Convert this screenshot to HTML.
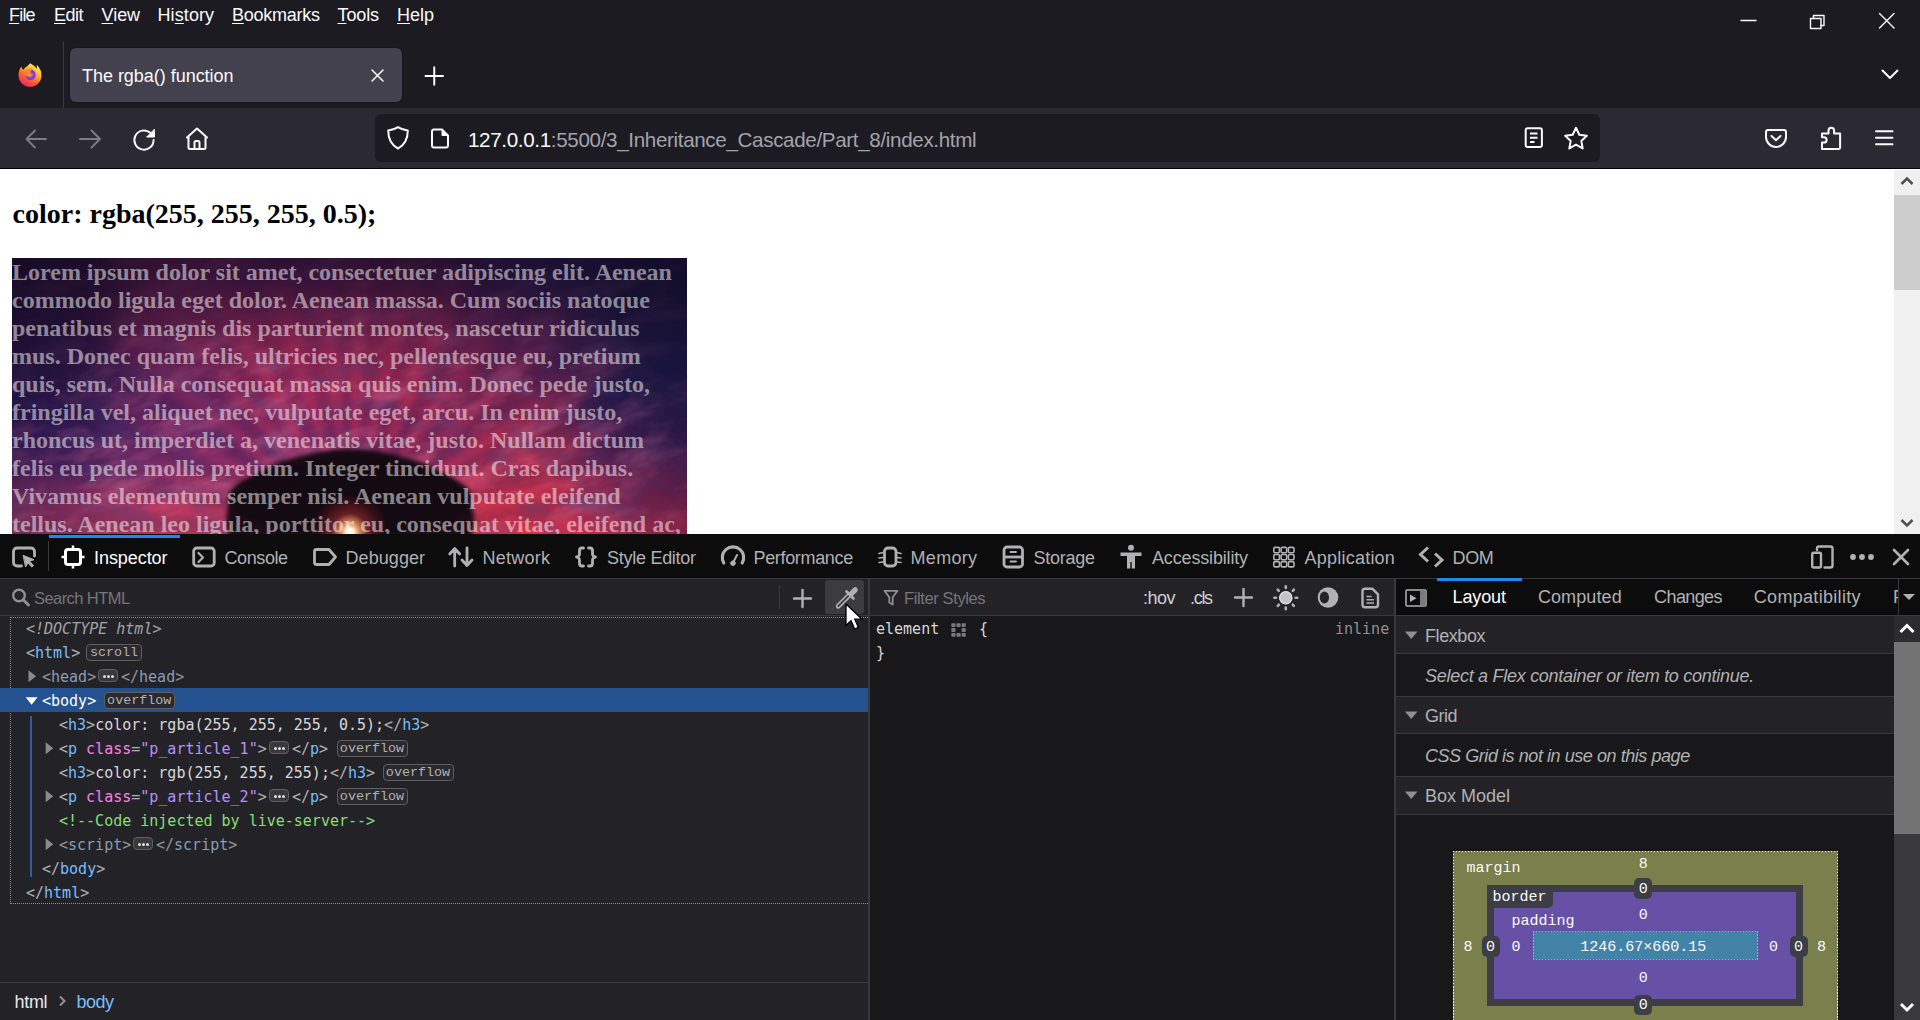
<!DOCTYPE html>
<html lang="en"><head>
<meta charset="utf-8">
<title>The rgba() function</title>
<style>
*{box-sizing:border-box;margin:0;padding:0}
html,body{width:1920px;height:1020px;overflow:hidden;background:#1c1b22}
body{position:relative;font-family:"Liberation Sans",sans-serif;color:#fbfbfe}
.abs{position:absolute}
.t{position:absolute;white-space:nowrap;line-height:1}
svg{position:absolute;overflow:visible}
/* ---------- browser chrome ---------- */
#titlebar{left:0;top:0;width:1920px;height:108px;background:#1c1b22}
.menu{font-size:18px;top:6px;color:#fbfbfe}
.menu u{text-decoration:underline;text-underline-offset:2px;text-decoration-thickness:1px}
#tab{left:70px;top:48px;width:332px;height:54px;background:#42414d;border-radius:6px;box-shadow:0 0 2px rgba(0,0,0,.5)}
#navbar{left:0;top:108px;width:1920px;height:60px;background:#2b2a33}
#navline{left:0;top:168px;width:1920px;height:1px;background:#030309}
#urlbar{left:375px;top:114px;width:1225px;height:48px;background:#1c1b22;border-radius:6px}
/* ---------- page ---------- */
#page{left:0;top:169px;width:1920px;height:365px;background:#fff;overflow:hidden}
#page h3{position:absolute;left:12.5px;top:28.5px;font:bold 28px/32px "Liberation Serif",serif;color:#000;white-space:nowrap}
#art{position:absolute;left:12px;top:89px;width:675px;height:300px;overflow:hidden;background:#3a1c4a}
#art p{position:absolute;left:0;top:0;width:675px;font:bold 24px/28px "Liberation Serif",serif;color:rgba(255,255,255,.5)}

#art .sky{position:absolute;inset:0;background:
 radial-gradient(ellipse 280px 130px at 0% 0%,rgba(18,12,40,.95),rgba(18,12,40,0) 100%),
 radial-gradient(ellipse 250px 240px at 100% 10%,rgba(14,14,48,.97),rgba(14,14,48,0) 100%),
 radial-gradient(ellipse 170px 170px at 104% 60%,rgba(30,22,80,.92),rgba(30,22,80,0) 100%),
 radial-gradient(ellipse 240px 110px at 2% 58%,rgba(32,22,82,.95),rgba(32,22,82,0) 100%),
 radial-gradient(ellipse 200px 90px at 50% 8%,rgba(40,18,64,.7),rgba(40,18,64,0) 100%),
 radial-gradient(ellipse 440px 95px at 50% 108%,rgba(222,72,98,.9),rgba(222,72,98,0) 100%),
 linear-gradient(180deg,#30133c 0%,#561c52 30%,#64225e 55%,#8c3468 82%,#b84a6a 100%)}
#art .mesh{position:absolute;left:-150px;top:-150px;width:975px;height:576px;filter:blur(28px)}
#art .mesh i{position:absolute;display:block}
#art .rays{position:absolute;left:-100px;top:-120px;width:875px;height:520px;filter:blur(2.500px);opacity:.36;background:
 repeating-conic-gradient(from 1deg at 50% 75.500%,rgba(235,55,85,.45) 0deg 2deg,rgba(24,12,56,.42) 5deg 8deg,rgba(235,55,85,.45) 11deg),
 repeating-conic-gradient(from 4deg at 50% 75.500%,rgba(235,45,75,.4) 0deg 3deg,rgba(24,12,56,.0) 7deg 13deg,rgba(235,45,75,.4) 17deg);
 -webkit-mask-image:radial-gradient(ellipse 400px 270px at 52% 75%,#000 0%,#000 45%,transparent 100%);mask-image:radial-gradient(ellipse 400px 270px at 52% 75%,#000 0%,#000 45%,transparent 100%)}
#art .glow{position:absolute;inset:0;background:linear-gradient(180deg,rgba(12,6,28,.38) 0,rgba(12,6,28,.1) 30%,rgba(12,6,28,0) 45%),linear-gradient(90deg,rgba(14,8,40,.3) 0,rgba(14,8,40,0) 16%,rgba(14,8,40,0) 84%,rgba(10,8,40,.3) 100%)}
#art .tree{position:absolute;left:214px;top:192px;width:248px;height:140px;border-radius:50%;background:#140a12;filter:blur(2px);opacity:.95}
#art .tree.t2{left:216px;top:204px;width:244px;height:72px}
#art .tree.t3{left:280px;top:192px;width:116px;height:60px;opacity:.6}
#art .sun{position:absolute;left:300px;top:236px;width:76px;height:76px;border-radius:50%;background:radial-gradient(circle,#fff 0,#fff3dc 7%,rgba(255,170,110,.9) 15%,rgba(230,60,60,.4) 34%,rgba(200,40,50,.18) 55%,rgba(200,40,50,0) 72%)}
#pscroll{left:1894px;top:170px;width:26px;height:364px;background:#f0f0f0}
#pthumb{left:1894px;top:195px;width:26px;height:95px;background:#cdcdcd}
/* ---------- devtools ---------- */
#dt{left:0;top:534px;width:1920px;height:486px;background:#232327}
#dtbar{left:0;top:534px;width:1920px;height:44px;background:#0c0c0d}
.dtl{font-size:18px;top:549px;color:#b1b1b3}
.mono{font-family:"Liberation Mono",monospace;font-size:15px}

/* markup */
.row{position:absolute;left:0;height:24px;white-space:pre;font:15px/24px "DejaVu Sans Mono","Liberation Mono",monospace;color:#b1b1b3;letter-spacing:0;margin-top:.5px}
.tg{color:#75bfff}.an{color:#ff7de9}.av{color:#b98eff}.tx{color:#d7d7db}.cm{color:#86de74}.gy{color:#939395}.gy .tg{color:#8a9bb5}
.bdg{position:absolute;height:17px;border:1px solid #5e5e63;border-radius:4px;background:#2a2a2e;color:#b1b1b3;font:13.4px/15px "Liberation Mono",monospace;text-align:center;white-space:nowrap}
.ell{position:absolute;width:20px;height:13px;border:1px solid #5e5e63;border-radius:4px;background:#38383d}
.ell i{position:absolute;top:4.5px;width:3px;height:3px;border-radius:50%;background:#e0e0e2}
.hl{background:#7a7a80}
.line{position:absolute;background:#38383d}
.sbt{font-size:16.5px;top:590px;color:#b1b1b3}
.acc{position:absolute;left:1396px;width:498px;background:#232327;border-top:1px solid #38383d;border-bottom:1px solid #38383d}
.acct{font-size:18px;color:#b1b1b3;left:1425px}
.acci{font-size:18px;font-style:italic;color:#b1b1b3;left:1425px}
.bm{font:15px/1 "Liberation Mono",monospace;color:#fbfbfe;position:absolute;white-space:nowrap}
.pill{position:absolute;background:#3d3d45;border-radius:5px}
</style>
</head>
<body>
<!-- TITLEBAR -->
<div id="titlebar" class="abs"></div>
<div class="t menu" style="left: 9px; letter-spacing: -0.81px;"><u>F</u>ile</div>
<div class="t menu" style="left: 54px; letter-spacing: -0.48px;"><u>E</u>dit</div>
<div class="t menu" style="left: 101.5px; letter-spacing: -0.03px;"><u>V</u>iew</div>
<div class="t menu" style="left: 157.5px; letter-spacing: 0.1px;">Hi<u>s</u>tory</div>
<div class="t menu" style="left: 232px; letter-spacing: -0.24px;"><u>B</u>ookmarks</div>
<div class="t menu" style="left: 337.5px; letter-spacing: -0.11px;"><u>T</u>ools</div>
<div class="t menu" style="left: 397px; letter-spacing: 0.02px;"><u>H</u>elp</div>
<!-- NAVBAR -->
<div id="navbar" class="abs"></div>
<div id="navline" class="abs"></div>
<div id="urlbar" class="abs"></div>
<!-- TAB -->
<div id="tab" class="abs"></div>
<div class="t" style="left: 82px; top: 66.5px; font-size: 18px; color: rgb(251, 251, 254); letter-spacing: -0.03px;">The rgba() function</div>
<div class="t" style="left: 468px; top: 129.5px; font-size: 20.6px; color: rgb(251, 251, 254); letter-spacing: -0.34px;">127.0.0.1<span style="color:#a3a3ab">:5500/3_Inheritance_Cascade/Part_8/index.html</span></div>
<!-- PAGE -->
<div id="page" class="abs">
<h3>color: rgba(255, 255, 255, 0.5);</h3>
<div id="art"><div class="mesh"><i style="left:30.0px;top:30.0px;width:233.5px;height:167.0px;background:#24102e"></i><i style="left:262.5px;top:30.0px;width:113.5px;height:167.0px;background:#4a1840"></i><i style="left:375.0px;top:30.0px;width:113.5px;height:167.0px;background:#3a1440"></i><i style="left:487.5px;top:30.0px;width:113.5px;height:167.0px;background:#3a1438"></i><i style="left:600.0px;top:30.0px;width:113.5px;height:167.0px;background:#261640"></i><i style="left:712.5px;top:30.0px;width:233.5px;height:167.0px;background:#1a1436"></i><i style="left:30.0px;top:196.0px;width:233.5px;height:47.0px;background:#2a1238"></i><i style="left:262.5px;top:196.0px;width:113.5px;height:47.0px;background:#6e2050"></i><i style="left:375.0px;top:196.0px;width:113.5px;height:47.0px;background:#8a2452"></i><i style="left:487.5px;top:196.0px;width:113.5px;height:47.0px;background:#7a2250"></i><i style="left:600.0px;top:196.0px;width:113.5px;height:47.0px;background:#4a1a48"></i><i style="left:712.5px;top:196.0px;width:233.5px;height:47.0px;background:#1e1840"></i><i style="left:30.0px;top:242.0px;width:233.5px;height:47.0px;background:#2a1644"></i><i style="left:262.5px;top:242.0px;width:113.5px;height:47.0px;background:#6a2458"></i><i style="left:375.0px;top:242.0px;width:113.5px;height:47.0px;background:#a02a56"></i><i style="left:487.5px;top:242.0px;width:113.5px;height:47.0px;background:#9a2850"></i><i style="left:600.0px;top:242.0px;width:113.5px;height:47.0px;background:#5a1e4c"></i><i style="left:712.5px;top:242.0px;width:233.5px;height:47.0px;background:#201a46"></i><i style="left:30.0px;top:288.0px;width:233.5px;height:47.0px;background:#2a1850"></i><i style="left:262.5px;top:288.0px;width:113.5px;height:47.0px;background:#5a2262"></i><i style="left:375.0px;top:288.0px;width:113.5px;height:47.0px;background:#8a2860"></i><i style="left:487.5px;top:288.0px;width:113.5px;height:47.0px;background:#8a2656"></i><i style="left:600.0px;top:288.0px;width:113.5px;height:47.0px;background:#7a2450"></i><i style="left:712.5px;top:288.0px;width:233.5px;height:47.0px;background:#261c50"></i><i style="left:30.0px;top:334.0px;width:233.5px;height:47.0px;background:#44226a"></i><i style="left:262.5px;top:334.0px;width:113.5px;height:47.0px;background:#6a2a6c"></i><i style="left:375.0px;top:334.0px;width:113.5px;height:47.0px;background:#6a2868"></i><i style="left:487.5px;top:334.0px;width:113.5px;height:47.0px;background:#6a2660"></i><i style="left:600.0px;top:334.0px;width:113.5px;height:47.0px;background:#b02c4c"></i><i style="left:712.5px;top:334.0px;width:233.5px;height:47.0px;background:#4a2058"></i><i style="left:30.0px;top:380.0px;width:233.5px;height:167.0px;background:#a03660"></i><i style="left:262.5px;top:380.0px;width:113.5px;height:167.0px;background:#b83c5e"></i><i style="left:375.0px;top:380.0px;width:113.5px;height:167.0px;background:#c04058"></i><i style="left:487.5px;top:380.0px;width:113.5px;height:167.0px;background:#c83c50"></i><i style="left:600.0px;top:380.0px;width:113.5px;height:167.0px;background:#d03248"></i><i style="left:712.5px;top:380.0px;width:233.5px;height:167.0px;background:#b02c50"></i></div><div class="rays"></div><svg class="nz" width="675" height="276" viewBox="0 0 675 276" style="left:0;top:0;overflow:hidden"><defs><filter id="nz" x="0" y="0" width="100%" height="100%"><feTurbulence type="fractalNoise" baseFrequency="0.018 0.045" numOctaves="4" seed="7" result="n"></feTurbulence><feColorMatrix in="n" type="matrix" values="0 0 0 0 0.86  0 0 0 0 0.2  0 0 0 0 0.36  1.9 0 0 0 -0.85"></feColorMatrix></filter><filter id="nz2" x="0" y="0" width="100%" height="100%"><feTurbulence type="fractalNoise" baseFrequency="0.022 0.05" numOctaves="4" seed="23" result="n"></feTurbulence><feColorMatrix in="n" type="matrix" values="0 0 0 0 0.07  0 0 0 0 0.05  0 0 0 0 0.2  0 1.9 0 0 -0.85"></feColorMatrix></filter><radialGradient id="nm" cx=".5" cy=".9" r=".75"><stop offset="0" stop-color="#fff"></stop><stop offset=".6" stop-color="#fff"></stop><stop offset="1" stop-color="#fff" stop-opacity=".25"></stop></radialGradient><mask id="nmk"><rect width="675" height="276" fill="url(#nm)"></rect></mask></defs><g mask="url(#nmk)"><rect x="-160" y="-160" width="995" height="600" filter="url(#nz)" opacity=".55" transform="rotate(-18 338 276)"></rect><rect x="-160" y="-160" width="995" height="600" filter="url(#nz2)" opacity=".5" transform="rotate(14 338 276)"></rect></g></svg><div class="glow"></div><div class="tree"></div><div class="tree t2"></div><div class="tree t3"></div><div class="sun"></div><p>Lorem ipsum dolor sit amet, consectetuer adipiscing elit. Aenean commodo ligula eget dolor. Aenean massa. Cum sociis natoque penatibus et magnis dis parturient montes, nascetur ridiculus mus. Donec quam felis, ultricies nec, pellentesque eu, pretium quis, sem. Nulla consequat massa quis enim. Donec pede justo, fringilla vel, aliquet nec, vulputate eget, arcu. In enim justo, rhoncus ut, imperdiet a, venenatis vitae, justo. Nullam dictum felis eu pede mollis pretium. Integer tincidunt. Cras dapibus. Vivamus elementum semper nisi. Aenean vulputate eleifend tellus. Aenean leo ligula, porttitor eu, consequat vitae, eleifend ac, enim. Aliquam lorem ante, dapibus in, viverra quis, feugiat a, tellus.</p></div>
</div>
<div id="pscroll" class="abs"></div>
<div id="pthumb" class="abs"></div>
<!-- DEVTOOLS -->
<div id="dt" class="abs"></div>
<div id="dtbar" class="abs"></div>
<!-- devtools toolbar -->
<div class="abs" style="left:49px;top:534.5px;width:131px;height:3.5px;background:#1f87ef"></div>
<div class="line" style="left:48px;top:541px;width:1px;height:30px"></div>
<div class="t dtl" style="left: 94px; color: rgb(255, 255, 255); letter-spacing: -0.06px;">Inspector</div>
<div class="t dtl" style="left: 224.5px; letter-spacing: -0.41px;">Console</div>
<div class="t dtl" style="left: 345.5px; letter-spacing: 0.08px;">Debugger</div>
<div class="t dtl" style="left: 482.5px; letter-spacing: 0.26px;">Network</div>
<div class="t dtl" style="left: 607px; letter-spacing: -0.27px;">Style Editor</div>
<div class="t dtl" style="left: 753.5px; letter-spacing: -0.34px;">Performance</div>
<div class="t dtl" style="left: 910.5px; letter-spacing: 0.32px;">Memory</div>
<div class="t dtl" style="left: 1033.5px; letter-spacing: -0.24px;">Storage</div>
<div class="t dtl" style="left: 1152px; letter-spacing: -0.16px;">Accessibility</div>
<div class="t dtl" style="left: 1304.5px; letter-spacing: 0.23px;">Application</div>
<div class="t dtl" style="left: 1452.5px; letter-spacing: -0.32px;">DOM</div>

<div class="abs" style="left:0;top:578px;width:1920px;height:38px;background:#232327;border-top:1px solid #38383d;border-bottom:1px solid #38383d"></div>
<div class="t sbt" style="left: 34px; color: rgb(117, 117, 122); letter-spacing: -0.57px;">Search HTML</div>
<div class="line" style="left:779px;top:585px;width:1px;height:24px"></div>
<div class="abs" style="left:825px;top:580px;width:39px;height:34px;border-radius:3px;background:#3b3b40"></div>
<div class="t sbt" style="left: 904px; color: rgb(117, 117, 122); letter-spacing: -0.38px;">Filter Styles</div>
<div class="t sbt" style="left: 1143px; top: 588.5px; font-size: 18px; color: rgb(207, 207, 210); letter-spacing: -0.48px;">:hov</div>
<div class="t sbt" style="left: 1190px; top: 588.5px; font-size: 18px; color: rgb(207, 207, 210); letter-spacing: -1.3px;">.cls</div>
<!--ICONS-SEARCH-->
<div class="abs" style="left:0;top:688px;width:868px;height:24px;background:#24518f"></div>
<div class="abs" style="left:10px;top:617px;width:858px;height:287px;border:1px dotted #8f8f94;border-right:none"></div>
<div class="abs" style="left:0;top:688px;width:868px;height:24px;background:#24518f"></div>
<div class="abs" style="left:30px;top:716px;width:2px;height:161px;background:#2f5c9c"></div>
<div class="row" style="left:26px;top:616px"><i class="gy" style="color:#a3a3a8">&lt;!DOCTYPE html&gt;</i></div>
<div class="row" style="left:26px;top:640px">&lt;<span class="tg">html</span>&gt;</div>
<div class="row" style="left:42px;top:664px"><span class="gy">&lt;<span class="tg">head</span>&gt;</span></div>
<div class="row" style="left:121px;top:664px"><span class="gy">&lt;/<span class="tg">head</span>&gt;</span></div>
<div class="row" style="left:42px;top:688px"><span style="color:#fff">&lt;body&gt;</span></div>
<div class="row" style="left:59px;top:712px">&lt;<span class="tg">h3</span>&gt;<span class="tx">color: rgba(255, 255, 255, 0.5);</span>&lt;/<span class="tg">h3</span>&gt;</div>
<div class="row" style="left:59px;top:736px">&lt;<span class="tg">p</span> <span class="an">class</span>=<span class="av">"p_article_1"</span>&gt;</div>
<div class="row" style="left:292px;top:736px">&lt;/<span class="tg">p</span>&gt;</div>
<div class="row" style="left:59px;top:760px">&lt;<span class="tg">h3</span>&gt;<span class="tx">color: rgb(255, 255, 255);</span>&lt;/<span class="tg">h3</span>&gt;</div>
<div class="row" style="left:59px;top:784px">&lt;<span class="tg">p</span> <span class="an">class</span>=<span class="av">"p_article_2"</span>&gt;</div>
<div class="row" style="left:292px;top:784px">&lt;/<span class="tg">p</span>&gt;</div>
<div class="row" style="left:59px;top:808px"><span class="cm">&lt;!--Code injected by live-server--&gt;</span></div>
<div class="row" style="left:59px;top:832px"><span class="gy">&lt;<span class="tg">script</span>&gt;</span></div>
<div class="row" style="left:156px;top:832px"><span class="gy">&lt;/<span class="tg">script</span>&gt;</span></div>
<div class="row" style="left:42px;top:856px">&lt;/<span class="tg">body</span>&gt;</div>
<div class="row" style="left:26px;top:880px">&lt;/<span class="tg">html</span>&gt;</div>
<div class="bdg" style="left:86px;top:643.5px;width:56px">scroll</div>
<div class="bdg" style="left:104px;top:691.5px;width:70.5px">overflow</div>
<div class="bdg" style="left:336.5px;top:739.5px;width:71.0px">overflow</div>
<div class="bdg" style="left:382.5px;top:763.5px;width:71.0px">overflow</div>
<div class="bdg" style="left:336.5px;top:787.5px;width:71.0px">overflow</div>
<div class="ell" style="left:98px;top:669px"><i style="left:3.5px"></i><i style="left:7.5px"></i><i style="left:11.5px"></i></div>
<div class="ell" style="left:269px;top:741px"><i style="left:3.5px"></i><i style="left:7.5px"></i><i style="left:11.5px"></i></div>
<div class="ell" style="left:269px;top:789px"><i style="left:3.5px"></i><i style="left:7.5px"></i><i style="left:11.5px"></i></div>
<div class="ell" style="left:133px;top:837px"><i style="left:3.5px"></i><i style="left:7.5px"></i><i style="left:11.5px"></i></div>
<!--ICONS-MARKUP-->
<div class="line" style="left:0;top:982px;width:868px;height:1px"></div>
<div class="t" style="left: 14.5px; top: 993px; font-size: 18px; color: rgb(232, 232, 234); letter-spacing: -0.31px;">html</div>
<div class="t" style="left: 76.5px; top: 993px; font-size: 18px; color: rgb(117, 191, 255); letter-spacing: -0.48px;">body</div>
<div class="abs" style="left:868px;top:579px;width:2px;height:441px;background:#38383d"></div>
<div class="abs" style="left:870px;top:616px;width:524px;height:404px;background:#18181a"></div>
<div class="row" style="left:876px;top:616px;color:#d7d7db">element</div>
<div class="row" style="left:979px;top:616px;color:#d7d7db">{</div>
<div class="row" style="left:876px;top:640px;color:#d7d7db">}</div>
<div class="row" style="left:1335px;top:616px;color:#8f8f94">inline</div>
<div class="abs" style="left:1393.5px;top:579px;width:2px;height:441px;background:#38383d"></div>
<div class="abs" style="left:1396px;top:579px;width:524px;height:36px;background:#0c0c0d"></div>
<div class="abs" style="left:1396px;top:616px;width:524px;height:404px;background:#18181a"></div>
<div class="abs" style="left:1437px;top:578px;width:85px;height:3px;background:#1f87ef"></div>
<div class="t dtl" style="left: 1452.5px; top: 588px; color: rgb(255, 255, 255); letter-spacing: -0.13px;">Layout</div>
<div class="t dtl" style="left: 1537.9px; top: 588px; letter-spacing: 0.11px;">Computed</div>
<div class="t dtl" style="left: 1654.1px; top: 588px; letter-spacing: -0.61px;">Changes</div>
<div class="t dtl" style="left: 1753.8px; top: 588px; letter-spacing: 0.31px;">Compatibility</div>
<div class="abs" style="left:1893px;top:588px;width:5px;height:20px;overflow:hidden"><div class="t dtl" style="left:0;top:0">Fonts</div></div>
<div class="line" style="left:1898px;top:579px;width:1px;height:36px"></div>
<div class="acc" style="top:615px;height:39px"></div>
<div class="acc" style="top:696px;height:38px"></div>
<div class="acc" style="top:776px;height:39px"></div>
<div class="t acct" style="top: 627px; letter-spacing: -0.41px;">Flexbox</div>
<div class="t acct" style="top: 707px; letter-spacing: -0.47px;">Grid</div>
<div class="t acct" style="top: 787px; letter-spacing: 0.01px;">Box Model</div>
<div class="t acci" style="top: 667px; letter-spacing: -0.28px;">Select a Flex container or item to continue.</div>
<div class="t acci" style="top: 747px; letter-spacing: -0.44px;">CSS Grid is not in use on this page</div>
<div class="abs" style="left:1894px;top:616px;width:26px;height:404px;background:#38383d"></div>
<div class="abs" style="left:1894px;top:616px;width:26px;height:26px;background:#2b2b30"></div>
<div class="abs" style="left:1894px;top:642px;width:26px;height:192px;background:#737373"></div>
<!--ICONS-LAYOUT-->
<div class="abs" style="left:1453px;top:851px;width:385px;height:180px;background:repeating-linear-gradient(90deg,#eef4c4 0 1.5px,transparent 1.5px 3px) 0 0/100% 1px no-repeat,repeating-linear-gradient(180deg,#eef4c4 0 1.5px,transparent 1.5px 3px) 0 0/1px 100% no-repeat,repeating-linear-gradient(180deg,#eef4c4 0 1.5px,transparent 1.5px 3px) 100% 0/1px 100% no-repeat,#7a804c"></div>
<div class="abs" style="left:1487px;top:885px;width:316px;height:121px;background:#3d3d45"></div>
<div class="abs" style="left:1494px;top:892px;width:302px;height:107px;background:#6651a6"></div>
<div class="abs" style="left:1487px;top:885px;width:66px;height:22.5px;background:#3d3d45;border-radius:0 0 5px 0"></div>
<div class="abs" style="left:1533px;top:931px;width:225px;height:29px;background:repeating-linear-gradient(90deg,#58c0f0 0 1.5px,transparent 1.5px 3px) 0 0/100% 1px no-repeat,repeating-linear-gradient(90deg,#58c0f0 0 1.5px,transparent 1.5px 3px) 0 100%/100% 1px no-repeat,repeating-linear-gradient(180deg,#58c0f0 0 1.5px,transparent 1.5px 3px) 0 0/1px 100% no-repeat,repeating-linear-gradient(180deg,#58c0f0 0 1.5px,transparent 1.5px 3px) 100% 0/1px 100% no-repeat,#4483a8"></div>
<div class="pill" style="left:1634px;top:878px;width:18px;height:21px"></div>
<div class="pill" style="left:1634px;top:994.5px;width:18px;height:20.5px"></div>
<div class="pill" style="left:1482px;top:936px;width:17.5px;height:21px"></div>
<div class="pill" style="left:1790px;top:936px;width:17.5px;height:21px"></div>
<div class="bm" style="left:1466.5px;top:861.0px">margin</div>
<div class="bm" style="left:1492.5px;top:890.25px">border</div>
<div class="bm" style="left:1511.5px;top:913.5px">padding</div>
<div class="bm" style="left:1543.2px;top:857.25px;width:200px;text-align:center">8</div>
<div class="bm" style="left:1543.2px;top:882.0px;width:200px;text-align:center">0</div>
<div class="bm" style="left:1543.2px;top:908.0px;width:200px;text-align:center">0</div>
<div class="bm" style="left:1543.2px;top:940.25px;width:200px;text-align:center">1246.67×660.15</div>
<div class="bm" style="left:1543.2px;top:971.0px;width:200px;text-align:center">0</div>
<div class="bm" style="left:1543.2px;top:998.0px;width:200px;text-align:center">0</div>
<div class="bm" style="left:1368.1px;top:940.0px;width:200px;text-align:center">8</div>
<div class="bm" style="left:1390.6px;top:940.0px;width:200px;text-align:center">0</div>
<div class="bm" style="left:1416px;top:940.0px;width:200px;text-align:center">0</div>
<div class="bm" style="left:1673.4px;top:940.0px;width:200px;text-align:center">0</div>
<div class="bm" style="left:1698.5px;top:940.0px;width:200px;text-align:center">0</div>
<div class="bm" style="left:1721.6px;top:940.0px;width:200px;text-align:center">8</div>
<svg width="1920" height="1020" viewBox="0 0 1920 1020" style="left:0;top:0;pointer-events:none" fill="none" stroke-linecap="round" stroke-linejoin="round">
<defs><linearGradient id="ffg" x1="0.8" y1="0" x2="0.2" y2="1"><stop offset="0" stop-color="#fff36b"></stop><stop offset=".3" stop-color="#ffbd2e"></stop><stop offset=".6" stop-color="#ff6a2a"></stop><stop offset="1" stop-color="#f5156c"></stop></linearGradient><radialGradient id="ffp" cx=".5" cy=".5" r=".6"><stop offset="0" stop-color="#9059ff"></stop><stop offset="1" stop-color="#6e2bd6"></stop></radialGradient></defs>
<g stroke="#fbfbfe" stroke-width="1.4"><path d="M1741 20.5H1756"></path><path d="M1810.5 18.5h10.5v10h-10.5z"></path><path d="M1813.500 18.500v-3h10.500v10h-3"></path><path d="M1879.500 13.500l14.500 14.500M1894 13.500l-14.500 14.500"></path></g>
<path d="M1882.500 70.500l7.500 7.500l7.500-7.500" stroke="#fbfbfe" stroke-width="2"></path>
<g transform="translate(0 -1.200)"><path d="M30 64.500c-1.500 2.500-4 3-6.500 6.500c-1-.5-2-2-2-3.500c-2 2.500-3 5.500-3 9a11.500 11.500 0 0 0 23 0c0-5-2.500-8.500-5-10.500c.5 1.500.5 3 0 4c-1.500-3-4-4-6.500-5.500z" fill="url(#ffg)"></path><circle cx="30.500" cy="76" r="5.200" fill="url(#ffp)"></circle><path d="M25 72c2-2.500 6-3 8.500-1c-2 0-3 1-3 2.500c0 1.500 1.500 2.500 3 2c-1 2-3.500 3-5.500 2.500c-3-.8-4.500-3.500-3-6z" fill="#ff8a2a" opacity=".95"></path></g>
<path d="M63.500 42V108" stroke="#3a3944" stroke-width="1"></path>
<path d="M372 70l11 11M383 70l-11 11" stroke="#fbfbfe" stroke-width="1.5"></path>
<path d="M425.500 76H443M434.250 67.250V84.750" stroke="#fbfbfe" stroke-width="2"></path>
<path d="M46 139H26.500M35 130.500L26.500 139L35 147.500" stroke="#7c7b86" stroke-width="1.900"></path>
<path d="M80 139H100M91.500 130.500L100 139L91.500 147.500" stroke="#7c7b86" stroke-width="1.900"></path>
<path d="M153.600 140a9.600 9.600 0 1 1-3.300-7.200" stroke="#fbfbfe" stroke-width="2"></path><path d="M154.500 129.500v7.500h-7.500z" fill="#fbfbfe" stroke="#fbfbfe" stroke-width="1"></path>
<path d="M187 137.500L197 128.500L207 137.500M188.500 137v10.500a1.500 1.500 0 0 0 1.500 1.500h14a1.500 1.500 0 0 0 1.500-1.500V137M194.500 149v-6.500a1.500 1.500 0 0 1 1.500-1.500h2a1.500 1.500 0 0 1 1.500 1.500V149" stroke="#fbfbfe" stroke-width="2"></path>
<path d="M398 127.200c3 2 6 3 9.800 3.300c0 8-2.500 14-9.800 18c-7.300-4-9.800-10-9.800-18c3.800-.3 6.800-1.300 9.800-3.300z" stroke="#fbfbfe" stroke-width="2"></path>
<path d="M434 129.500h8l6 6v10a2 2 0 0 1-2 2h-12a2 2 0 0 1-2-2v-14a2 2 0 0 1 2-2z" stroke="#fbfbfe" stroke-width="2"></path><path d="M442 129.500v6h6z" fill="#fbfbfe" stroke="#fbfbfe" stroke-width="1"></path>
<rect x="1525.700" y="128.300" width="16.200" height="18.700" rx="2" stroke="#fbfbfe" stroke-width="2"></rect><path d="M1530 133.500h7.500M1530 137.700h7.500M1530 141.900h4.500" stroke="#fbfbfe" stroke-width="2" stroke-linecap="butt"></path>
<path d="M1576 127.800l3.300 6.900l7.500 1l-5.500 5.200l1.400 7.500l-6.700-3.700l-6.700 3.700l1.400-7.500l-5.500-5.200l7.500-1z" stroke="#fbfbfe" stroke-width="2"></path>
<path d="M1768 130h16a2 2 0 0 1 2 2v5a10 10 0 0 1-20 0v-5a2 2 0 0 1 2-2z" stroke="#fbfbfe" stroke-width="2"></path><path d="M1771.500 136l4.500 4.300l4.500-4.300" stroke="#fbfbfe" stroke-width="2"></path>
<path d="M1822 149v-6.500h2a2.600 2.600 0 0 0 0-5.200h-2V133.500h6.500v-3a2.800 2.800 0 0 1 5.600 0v3h6v14a1.500 1.500 0 0 1-1.500 1.500z" stroke="#fbfbfe" stroke-width="2"></path>
<path d="M1876 131.200h16.500M1876 137.700h16.500M1876 144.200h16.500" stroke="#fbfbfe" stroke-width="2"></path>
<path d="M1901.500 184l5.500-5.500l5.500 5.500" stroke="#505050" stroke-width="2.500" stroke-linecap="butt" stroke-linejoin="miter"></path>
<path d="M1901.500 520l5.500 5.500l5.500-5.500" stroke="#505050" stroke-width="2.500" stroke-linecap="butt" stroke-linejoin="miter"></path>
<g stroke="#b1b1b3" stroke-width="2.800">
<path d="M21.500 566H17a3.500 3.500 0 0 1-3.500-3.500v-11A3.500 3.500 0 0 1 17 548h14a3.500 3.500 0 0 1 3.500 3.500V556"></path>
<path d="M23.500 555.500l10.500 4.200l-4.300 1.600l3.800 4.200l-1.800 1.600l-3.800-4.200l-2.200 3.800z" fill="#b1b1b3" stroke-width="1"></path>
</g>
<g stroke="#fff" stroke-width="3"><rect x="65.500" y="549.500" width="15" height="15" rx="2.500"></rect><path d="M73 545.500v3M73 565.500v3M61.500 557h3M81.500 557h3" stroke-width="2.500" stroke-linecap="butt"></path></g>
<g stroke="#b1b1b3" stroke-width="2.800">
<rect x="193.700" y="548" width="20.500" height="18" rx="3"></rect><path d="M198.500 553l4.500 4.500l-4.500 4.500" stroke-width="2.200"></path>
<path d="M316.500 549.500h12.500l6.500 7.500l-6.500 7.500h-12.500a2 2 0 0 1-2-2v-11a2 2 0 0 1 2-2z"></path>
<path d="M454.700 566V549M449.700 554l5-5.500l5 5.500M467 548v17M462 560l5 5.500l5-5.500" stroke-width="2.800"></path>
<path d="M583.500 548h-1.500a2.500 2.500 0 0 0-2.500 2.500v3.500a3 3 0 0 1-3 3a3 3 0 0 1 3 3v3.500a2.500 2.500 0 0 0 2.500 2.500h1.500M588.500 548h1.500a2.500 2.500 0 0 1 2.500 2.500v3.500a3 3 0 0 0 3 3a3 3 0 0 0-3 3v3.500a2.500 2.500 0 0 1-2.500 2.500h-1.500"></path>
<path d="M723.800 563a10.700 10.700 0 1 1 18.400 0" stroke-width="3.100"></path><path d="M733 563l4-8" stroke-width="2"></path>
<circle cx="733" cy="563.200" r="2.300" fill="#b1b1b3" stroke-width="1"></circle>
<rect x="884.500" y="548" width="11.500" height="18" rx="3.500"></rect><path d="M879 553.500l4 -1M879 558l4-.5M879 562.500l4-.5M901 553.500l-4-1M901 558l-4-.5M901 562.500l-4-.5" stroke-width="1.600"></path>
<rect x="1004" y="547" width="18.500" height="20" rx="3"></rect><path d="M1004 557h18.500" stroke-linecap="butt"></path><path d="M1010.500 552h5.500M1010.500 561.500h5.500" stroke-width="1.800"></path>
</g>
<g fill="#b1b1b3"><circle cx="1131" cy="547.800" r="3"></circle><path d="M1120.500 552.500h21v3.600h-6.500v12.400h-3.300v-6.500h-1.400v6.500h-3.300v-12.400h-6.500z"></path></g>
<g stroke="#b1b1b3" stroke-width="1.600"><rect x="1273.8" y="547.4" width="5.600" height="5.300" rx="1.200"></rect><rect x="1281.1" y="547.4" width="5.600" height="5.300" rx="1.200"></rect><rect x="1288.4" y="547.4" width="5.600" height="5.300" rx="1.200"></rect><rect x="1273.8" y="554.5" width="5.600" height="5.300" rx="1.200"></rect><rect x="1281.1" y="554.5" width="5.600" height="5.300" rx="1.200"></rect><rect x="1288.4" y="554.5" width="5.600" height="5.300" rx="1.200"></rect><rect x="1273.8" y="561.6" width="5.600" height="5.300" rx="1.200"></rect><rect x="1281.1" y="561.6" width="5.600" height="5.300" rx="1.200"></rect><rect x="1288.4" y="561.6" width="5.600" height="5.300" rx="1.200"></rect></g>
<path d="M1428 547.500l-7.500 7l7.500 7M1435 553.500l7 6.500l-7 6.500" stroke="#b1b1b3" stroke-width="3" stroke-linecap="butt" stroke-linejoin="miter"></path>
<g stroke="#b1b1b3" stroke-width="2.400"><path d="M1817 550v-1.500a2 2 0 0 1 2-2h11.500a2 2 0 0 1 2 2v17a2 2 0 0 1-2 2h-6"></path><rect x="1812.200" y="552.800" width="8.800" height="14.700" rx="1.500"></rect></g>
<g fill="#b1b1b3"><circle cx="1853" cy="557" r="2.900"></circle><circle cx="1862" cy="557" r="2.900"></circle><circle cx="1871" cy="557" r="2.900"></circle></g>
<path d="M1894 550l14 14M1908 550l-14 14" stroke="#b1b1b3" stroke-width="2.600"></path>
<g stroke="#8f8f94" stroke-width="2.400"><circle cx="19" cy="595.500" r="5.800"></circle><path d="M23.500 600l5 5" stroke-width="3"></path></g>
<path d="M794 598.500h17M802.500 590v17" stroke="#b1b1b3" stroke-width="2.400"></path>
<g stroke="#b1b1b3"><path d="M848.500 593.500l-11.500 11.500a1.700 1.700 0 0 0 2.400 2.400l11.500-11.500" stroke-width="1.600"></path><path d="M846.500 591.500l7 7" stroke-width="2.600"></path><path d="M851 594l4.200-4.200" stroke-width="5.200"></path></g>
<path d="M884.500 590.800h13l-4.800 6.500v7.200l-3.400-2v-5.200z" stroke="#8f8f94" stroke-width="1.800"></path>
<path d="M1235 597.500h17M1243.500 589v17" stroke="#b1b1b3" stroke-width="2.400"></path>
<circle cx="1285.800" cy="597.800" r="6.200" fill="#c4c4c6" stroke="#e4e4e6" stroke-width="1.200"></circle><path d="M1295.60 597.80L1297.20 597.80M1292.73 604.73L1293.86 605.86M1285.80 607.60L1285.80 609.20M1278.87 604.73L1277.74 605.86M1276.00 597.80L1274.40 597.80M1278.87 590.87L1277.74 589.74M1285.80 588.00L1285.80 586.40M1292.73 590.87L1293.86 589.74" stroke="#b1b1b3" stroke-width="2.600"></path>
<circle cx="1328" cy="597.500" r="10.300" fill="#b1b1b3"></circle><ellipse cx="1324.400" cy="597.500" rx="4.600" ry="5.900" fill="#232327"></ellipse>
<path d="M1365 588.800h7.500l5.500 5.500v10.500a2.500 2.500 0 0 1-2.500 2.500h-10.500a2.500 2.500 0 0 1-2.500-2.500v-13.500a2.500 2.500 0 0 1 2.500-2.500z" stroke="#b1b1b3" stroke-width="2.400"></path><path d="M1366.500 596.500h5M1366.500 599.800h7.500M1366.500 603h7.500" stroke="#b1b1b3" stroke-width="1.500" stroke-linecap="butt"></path>
<rect x="1406" y="590" width="20" height="16" rx="1" stroke="#b1b1b3" stroke-width="1.500"></rect><rect x="1420" y="590.500" width="5.500" height="15" fill="#7a7a7e"></rect><path d="M1410 594.500v7.500l6.500-3.750z" fill="#b1b1b3"></path>
<path d="M1903 594h12l-6 6z" fill="#b1b1b3"></path>
<path d="M28.5 670.3l7.500 6l-7.500 6z" fill="#8a8a8e"></path>
<path d="M25.6 697.2h12l-6 7.500z" fill="#fff"></path>
<path d="M45.7 742.3l7.500 6l-7.500 6z" fill="#8a8a8e"></path>
<path d="M45.7 790.3l7.500 6l-7.500 6z" fill="#8a8a8e"></path>
<path d="M45.7 838.3l7.500 6l-7.500 6z" fill="#8a8a8e"></path>
<path d="M60 996.500l4.500 4.500l-4.500 4.500" stroke="#8f8f94" stroke-width="2" stroke-linecap="butt" stroke-linejoin="miter"></path>
<path d="M1405 631.5h12.500l-6.250 7.500z" fill="#8f8f94"></path>
<path d="M1405 711.5h12.500l-6.250 7.500z" fill="#8f8f94"></path>
<path d="M1405 791.5h12.500l-6.250 7.500z" fill="#8f8f94"></path>
<path d="M1900.500 632l6.500-6.500l6.500 6.500" stroke="#fff" stroke-width="3" stroke-linecap="butt" stroke-linejoin="miter"></path>
<path d="M1901 1004l6 6l6-6" stroke="#fff" stroke-width="3" stroke-linecap="butt" stroke-linejoin="miter"></path>
<rect x="951.30" y="623.20" width="4.200" height="3.900" rx=".800" fill="#77777c"></rect><rect x="956.45" y="623.20" width="4.200" height="3.900" rx=".800" fill="#77777c"></rect><rect x="961.60" y="623.20" width="4.200" height="3.900" rx=".800" fill="#77777c"></rect><rect x="951.30" y="628.05" width="4.200" height="3.900" rx=".800" fill="#77777c"></rect><rect x="961.60" y="628.05" width="4.200" height="3.900" rx=".800" fill="#77777c"></rect><rect x="951.30" y="632.90" width="4.200" height="3.900" rx=".800" fill="#77777c"></rect><rect x="956.45" y="632.90" width="4.200" height="3.900" rx=".800" fill="#77777c"></rect><rect x="961.60" y="632.90" width="4.200" height="3.900" rx=".800" fill="#77777c"></rect>
<!--SVG-MORE2-->
</svg>
<svg width="24" height="30" viewBox="0 0 24 30" style="left:845px;top:603px"><path d="M1 1v21.500l5-4.800l3.600 8.300l3.800-1.600l-3.600-8.200h7.200z" fill="#fff" stroke="#000" stroke-width="1.300" stroke-linejoin="miter"></path></svg>


</body></html>
